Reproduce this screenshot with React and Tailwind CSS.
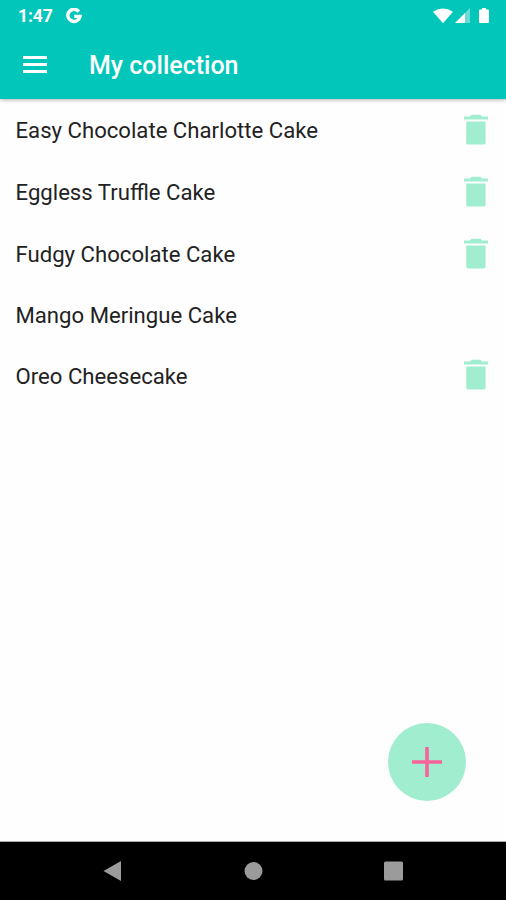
import React from "react";

const recipes = [
  { name: "Easy Chocolate Charlotte Cake", removable: true, height: "h-[62px]" },
  { name: "Eggless Truffle Cake", removable: true, height: "h-[62px]" },
  { name: "Fudgy Chocolate Cake", removable: true, height: "h-[62px]" },
  { name: "Mango Meringue Cake", removable: false, height: "h-[60px]" },
  { name: "Oreo Cheesecake", removable: true, height: "h-[61px]" },
];

const TrashIcon = () => (
  <svg width="24" height="31" viewBox="0 0 24 31" fill="#a0edcf">
    <path d="M0 2.5h6L7.5.8h9L18 2.5h6v3H0z" />
    <path d="M2.2 7.5h19.4V28a2.6 2.6 0 0 1-2.6 2.6H4.8A2.6 2.6 0 0 1 2.2 28z" />
  </svg>
);

const StatusBar = () => (
  <div className="flex h-8 items-center justify-between pl-[18px] pr-[16px] text-white">
    <div className="flex items-center gap-[13px]">
      <span className="text-[17.5px] font-bold leading-8 tracking-[-0.1px]">1:47</span>
      <svg width="16" height="16" viewBox="0 0 16 16" fill="none" stroke="#fff" strokeWidth="3.4">
        <path d="M12.800 3.600A6.100 6.100 0 1 0 14 8.400H8.200" />
      </svg>
    </div>
    <svg width="57" height="18" viewBox="0 0 57 18" fill="#fff">
      <path d="M0 4.8Q10 -2 20 4.8L10 16.2z" />
      <path d="M37 1v15h-6V7z" opacity="0.4" />
      <path d="M32 6v10H22z" />
      <path d="M49 1h4v1.500h2q1 0 1 1V15q0 1-1 1h-8q-1 0-1-1V3.500q0-1 1-1h2z" />
    </svg>
  </div>
);

const AppBar = () => (
  <div className="flex h-[67px] items-center pl-[23px]">
    <button aria-label="Open menu" className="mb-[2px] flex w-6 flex-col gap-[4px]">
      <span className="h-[3px] w-full bg-white" />
      <span className="h-[3px] w-full bg-white" />
      <span className="h-[3px] w-full bg-white" />
    </button>
    <h1 className="ml-[42px] text-[25px] font-medium text-white">
      My collection
    </h1>
  </div>
);

const NavigationBar = () => (
  <nav className="flex h-[59px] items-center border-t border-[#a8a8a8] bg-black pl-[103px]">
    <svg width="301" height="22" viewBox="0 0 301 22" fill="#9b9b9b">
      <path d="M0.500 11L18 1v20z" />
      <circle cx="150.500" cy="11" r="9" />
      <rect x="281" y="1.500" width="19" height="19" rx="1.500" />
    </svg>
  </nav>
);

export default function App() {
  return (
    <div className="relative flex h-[900px] w-[506px] flex-col overflow-hidden bg-[#fefefe] font-['Roboto',sans-serif]">
      <header className="z-10 h-[99px] bg-[#03c6ba] shadow-[0_1px_4px_rgba(0,0,0,0.3)]">
        <StatusBar />
        <AppBar />
      </header>
      <ul className="flex-1">
        {recipes.map((recipe) => (
          <li
            key={recipe.name}
            className={`flex items-center justify-between pl-[15.5px] pr-[18px] ${recipe.height}`}
          >
            <span className="pt-[2px] text-[22.15px] text-[#222]">{recipe.name}</span>
            {recipe.removable && (
              <button aria-label="Delete" className="mb-[2px]">
                <TrashIcon />
              </button>
            )}
          </li>
        ))}
      </ul>
      <button
        aria-label="Add recipe"
        className="absolute bottom-[99px] right-[40px] flex size-[78px] items-center justify-center rounded-full bg-[#a0edcf]"
      >
        <svg width="30" height="30" viewBox="0 0 30 30" stroke="#f7639b" strokeWidth="3.6">
          <path d="M0 15h30M15 0v30" />
        </svg>
      </button>
      <NavigationBar />
    </div>
  );
}
